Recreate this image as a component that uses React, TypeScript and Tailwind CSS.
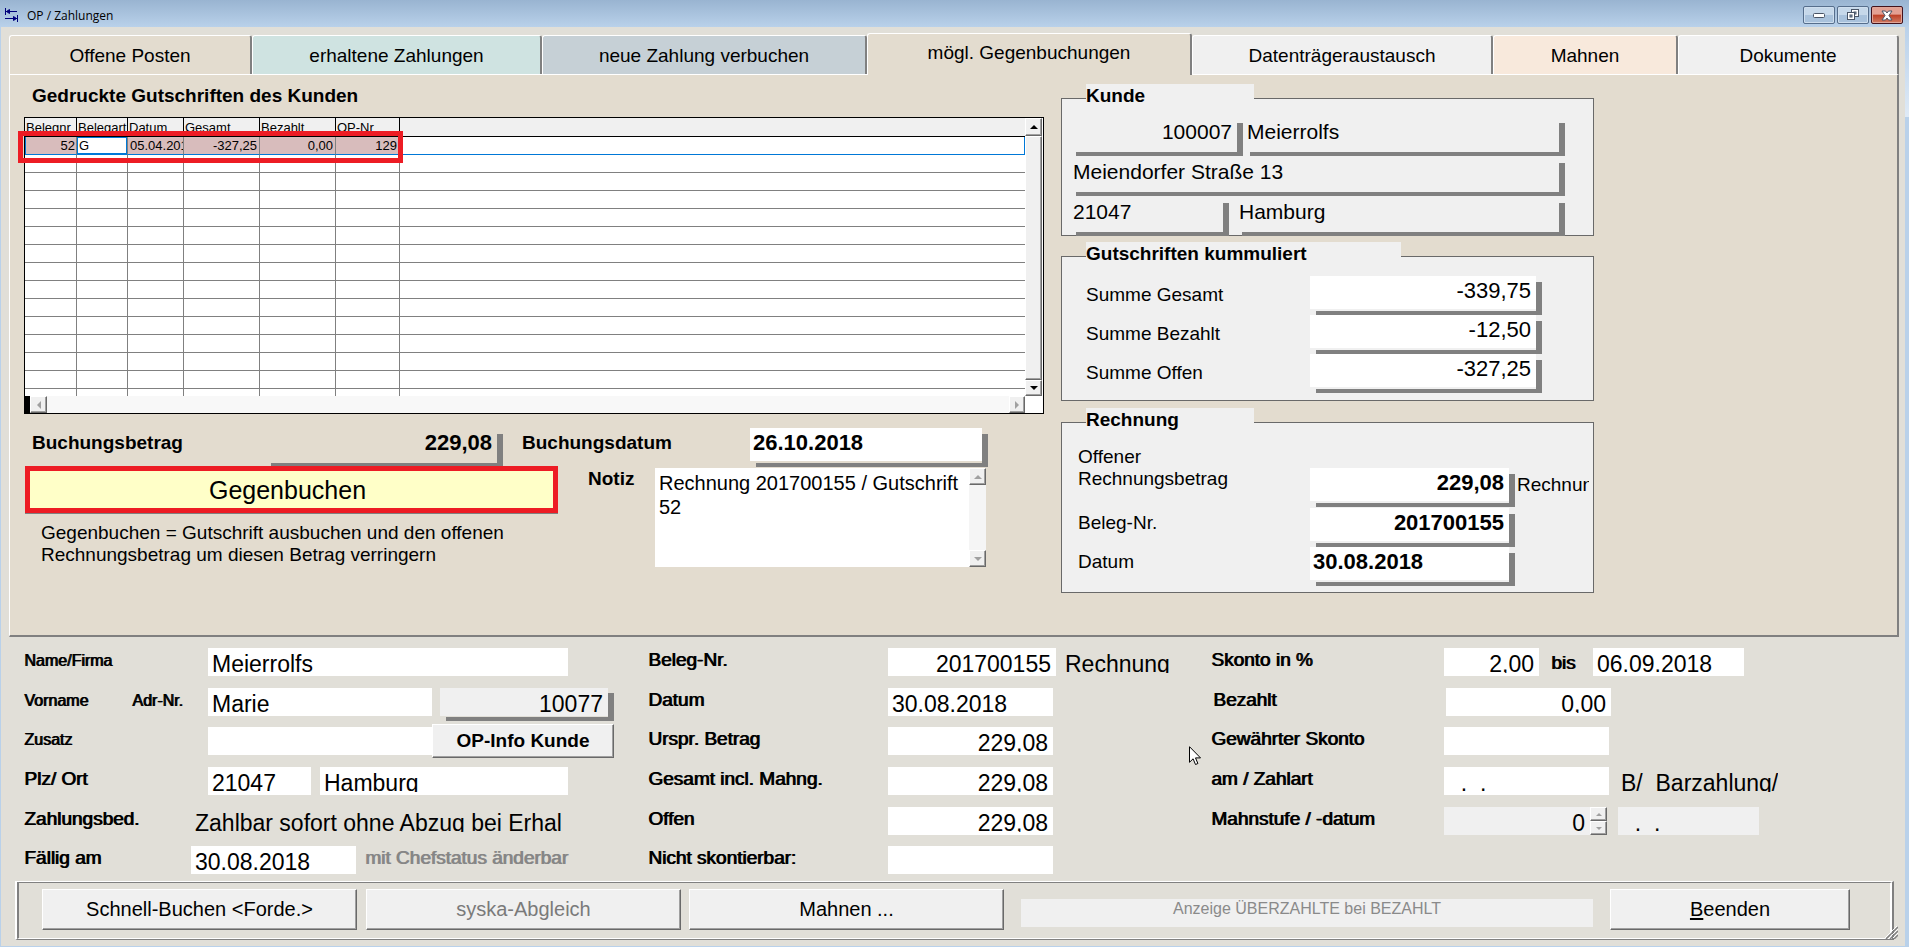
import React from "react";

const BEVEL =
  "border border-t-white border-l-white border-r-[#696969] border-b-[#696969] bg-[#f0f0f0] shadow-[inset_-1px_-1px_0_0_#a0a0a0]";

const tabs = [
  { label: "Offene Posten", cls: "flex-[240_1_0%] bg-[#e3dccf]" },
  { label: "erhaltene Zahlungen", cls: "flex-[287_1_0%] bg-[#cfe3e1]" },
  { label: "neue Zahlung verbuchen", cls: "flex-[322_1_0%] bg-[#c6d0d6]" },
  { label: "mögl. Gegenbuchungen", cls: "flex-[322_1_0%] bg-[#e3dccf]", selected: true },
  { label: "Datenträgeraustausch", cls: "flex-[298_1_0%] bg-[#f0f0f0]" },
  { label: "Mahnen", cls: "flex-[182_1_0%] bg-[#f8e9dc]" },
  { label: "Dokumente", cls: "flex-[218_1_0%] bg-[#f0f0f0]" },
];

function Arrow({ dir, className }: { dir: "up" | "down" | "left" | "right"; className: string }) {
  const points = {
    up: "0,4 8,4 4,0",
    down: "0,0 8,0 4,4",
    left: "4,0 4,8 0,4",
    right: "0,0 0,8 4,4",
  }[dir];
  const flat = dir === "up" || dir === "down";
  return (
    <svg className={className} width={flat ? 8 : 4} height={flat ? 4 : 8} viewBox={flat ? "0 0 8 4" : "0 0 4 8"} aria-hidden="true">
      <polygon points={points} fill="currentColor" />
    </svg>
  );
}

function ScrollButton({
  dir,
  className,
  label,
  small = false,
}: {
  dir: "up" | "down" | "left" | "right";
  className: string;
  label: string;
  small?: boolean;
}) {
  return (
    <button type="button" aria-label={label} className={`flex shrink-0 items-center justify-center ${BEVEL} ${className}`}>
      <Arrow dir={dir} className={small ? "h-[3px] w-[6px] shrink-0" : "shrink-0"} />
    </button>
  );
}

function ShadowField({
  id,
  label,
  value,
  className,
}: {
  id: string;
  label?: string;
  value: string;
  className: string;
}) {
  return <input id={id} aria-label={label} defaultValue={value} className={`h-[33px] pr-[5px] pb-1 pl-[3px] outline-none ${className}`} />;
}

const ON_GRAY = "shadow-[0_2px_0_0_#f0f0f0,6px_6px_0_0_#808080]";
const ON_SAND = "shadow-[0_2px_0_0_#e3dccf,6px_6px_0_0_#808080]";

function FormField({
  id,
  value = "",
  className,
  right = false,
  gray = false,
  label,
}: {
  id: string;
  value?: string;
  className: string;
  right?: boolean;
  gray?: boolean;
  label?: string;
}) {
  return (
    <div
      className={`h-7 shrink-0 overflow-hidden border-b-[3px] ${gray ? "border-[#f0f0f0] bg-[#f0f0f0]" : "border-white bg-white"} ${className}`}
    >
      <input
        id={id}
        aria-label={label}
        defaultValue={value}
        className={`block h-8 w-full bg-transparent pr-[5px] pl-1 text-[23px] outline-none ${right ? "text-right" : ""}`}
      />
    </div>
  );
}

function FormLabel({
  htmlFor,
  children,
  className,
}: {
  htmlFor?: string;
  children: React.ReactNode;
  className: string;
}) {
  return (
    <label htmlFor={htmlFor} className={`shrink-0 whitespace-nowrap [text-shadow:-1px_0_0_currentColor] ${className}`}>
      {children}
    </label>
  );
}

const LABEL = "text-[19px] leading-[23px]";
const SMALL_LABEL = "text-[16px] leading-[25px]";
const FORM_ROWS = "grid grid-rows-[40px_39px_40px_40px_39px_28px]";

const CAPTION_BUTTON =
  "flex h-[18px] w-8 items-center justify-center rounded-[2px] border border-[#566e8c] bg-linear-to-b from-[#c6d8ea] from-50% to-[#a9c2dc] to-50% shadow-[inset_0_0_0_1px_#cfdfef]";

function TitleBar() {
  return (
    <header className="flex h-[27px] items-start bg-linear-to-b from-[#99b4d1] to-[#b9d1ea] pr-[6px] pl-[5px]">
      <svg className="mt-[8px]" width="13" height="15" viewBox="0 0 13 15" aria-hidden="true" fill="#00007b" stroke="#00007b" strokeWidth="1">
        <path d="M0.500 0v7M1 3.500h11M12.500 7v7M0 10.500h12" />
        <path d="M1.500 3.500l3-2v4zM11.500 10.500l-3-2v4z" />
      </svg>
      <h1 className="ml-[9px] pt-[6px] font-['Open_Sans',sans-serif] text-[12px] leading-5">OP / Zahlungen</h1>
      <div className="mt-[6px] ml-auto flex gap-[2px]">
        <button type="button" aria-label="Minimieren" className={CAPTION_BUTTON}>
          <svg width="12" height="6" className="mt-[2px]" aria-hidden="true">
            <rect x="0.5" y="0.5" width="11" height="4" rx="1" fill="#fff" stroke="#4a5566" />
          </svg>
        </button>
        <button type="button" aria-label="Wiederherstellen" className={CAPTION_BUTTON}>
          <svg width="12" height="12" aria-hidden="true" fill="#fff" stroke="#4a5566">
            <rect x="4.5" y="0.5" width="7" height="7" />
            <rect x="7" y="3" width="2" height="2" fill="#9db6d0" />
            <rect x="0.5" y="3.5" width="7" height="7" />
            <rect x="3" y="6" width="2" height="2" fill="#9db6d0" />
          </svg>
        </button>
        <button
          type="button"
          aria-label="Schließen"
          className="flex h-[18px] w-8 items-center justify-center rounded-[2px] border border-[#43121c] bg-linear-to-b from-[#e3a093] from-45% via-[#bc3f26] via-50% to-[#d07a62] shadow-[inset_0_0_0_1px_#e0a598]"
        >
          <svg width="12" height="11" viewBox="0 0 12 11" aria-hidden="true">
            <path d="M1 1h3.500l1.500 2 1.500-2h3.500l-3 4.500 3 4.500h-3.500l-1.500-2-1.500 2h-3.500l3-4.500z" fill="#fff" stroke="#4a5566" />
          </svg>
        </button>
      </div>
    </header>
  );
}

const CELL = "h-[18px] overflow-hidden border-r border-b border-[#808080] p-0 whitespace-nowrap";
const HEAD = "h-[19px] overflow-hidden border-r border-b border-black bg-[#f0f0f0] p-0 pt-[2px] pl-px text-left font-normal whitespace-nowrap";
const MARKED = "h-[18px] overflow-hidden border-r border-b border-r-[#808080] border-b-[#0078d7] bg-[#d8bcbc] p-0 whitespace-nowrap";

function CreditTable() {
  return (
    <div className="relative mt-[10px] border border-black bg-white">
      <div className="flex h-[278px]">
        <div className="min-w-0 flex-1 overflow-hidden">
          <table className="w-full table-fixed border-separate border-spacing-0 text-[13px] leading-4">
            <colgroup>
              <col className="w-[52px]" />
              <col className="w-[51px]" />
              <col className="w-[56px]" />
              <col className="w-[76px]" />
              <col className="w-[76px]" />
              <col className="w-[64px]" />
              <col />
            </colgroup>
            <thead>
              <tr>
                <th className={HEAD}>Belegnr</th>
                <th className={HEAD}>Belegart</th>
                <th className={HEAD}>Datum</th>
                <th className={HEAD}>Gesamt</th>
                <th className={HEAD}>Bezahlt</th>
                <th className={HEAD}>OP-Nr</th>
                <th className="border-b border-black bg-[#f0f0f0] p-0" />
              </tr>
            </thead>
            <tbody>
              <tr>
                <td className={`${MARKED} border-l border-l-[#0078d7] pr-px text-right`}>52</td>
                <td className={MARKED}>
                  <input aria-label="Belegart" defaultValue="G" className="block h-[17px] w-full border border-[#0078d7] bg-white pl-px outline-none" />
                </td>
                <td className={`${MARKED} pl-[2px]`}>05.04.2018</td>
                <td className={`${MARKED} pr-[2px] text-right`}>-327,25</td>
                <td className={`${MARKED} pr-[2px] text-right`}>0,00</td>
                <td className={`${MARKED} pr-[2px] text-right`}>129</td>
                <td className="border-r border-b border-[#0078d7] p-0" />
              </tr>
              {Array.from({ length: 14 }, (_, row) => (
                <tr key={row}>
                  {Array.from({ length: 6 }, (_, col) => (
                    <td key={col} className={CELL} />
                  ))}
                  <td className="border-b border-[#808080] p-0" />
                </tr>
              ))}
            </tbody>
          </table>
        </div>
        <div className="flex w-[17px] flex-col">
          <ScrollButton dir="up" label="Nach oben" className="h-[18px]" />
          <div className={`flex-1 ${BEVEL}`} />
          <ScrollButton dir="down" label="Nach unten" className="h-4" />
        </div>
        <div className="w-px" />
      </div>
      <div className="flex h-[17px] bg-[#f8f8f8]">
        <div className="w-[5px] bg-black" />
        <ScrollButton dir="left" label="Nach links" className="w-[17px] text-[#a0a0a0]" />
        <div className="flex-1" />
        <ScrollButton dir="right" label="Nach rechts" className="w-4 text-[#a0a0a0]" />
        <div className="w-[18px] bg-white" />
      </div>
      <div className="pointer-events-none absolute top-[13px] -left-[7px] h-8 w-[385px] border-[5px] border-[#ed1c24]" />
    </div>
  );
}

function BookingArea() {
  return (
    <section className="w-[1020px] shrink-0">
      <h2 className="pt-[10px] pl-2 text-[19px] leading-[22px] font-bold">Gedruckte Gutschriften des Kunden</h2>
      <CreditTable />
      <div className="mt-[14px] flex pl-2 font-bold">
        <label htmlFor="betrag" className="w-[233px] text-[19px] leading-[30px]">
          Buchungsbetrag
        </label>
        <ShadowField id="betrag" value="229,08" className={`w-[232px] bg-[#e3dccf] text-right text-[22px] ${ON_SAND}`} />
        <label htmlFor="datum" className="ml-[25px] w-[228px] text-[19px] leading-[30px]">
          Buchungsdatum
        </label>
        <ShadowField id="datum" value="26.10.2018" className={`w-[232px] bg-white text-[22px] ${ON_SAND}`} />
      </div>
      <div className="mt-[5px] flex">
        <div className="relative ml-px w-[533px]">
          <button
            type="button"
            className="block h-[47px] w-full border-[5px] border-[#ed1c24] bg-[#ffffc8] pr-2 text-[25px] leading-9 shadow-[0_1px_0_0_#808080]"
          >
            Gegenbuchen
          </button>
          <p className="mt-[9px] pl-4 text-[19px] leading-[22px]">
            Gegenbuchen = Gutschrift ausbuchen und den offenen
            <br />
            Rechnungsbetrag um diesen Betrag verringern
          </p>
        </div>
        <label htmlFor="notiz" className="ml-[30px] w-[67px] pt-[2px] text-[19px] leading-[22px] font-bold">
          Notiz
        </label>
        <div className="mt-[2px] flex h-[99px] w-[331px] bg-white">
          <textarea
            id="notiz"
            className="min-w-0 flex-1 resize-none overflow-hidden pt-[3px] pl-1 text-[20px] leading-6 outline-none"
            defaultValue="Rechnung 201700155 / Gutschrift 52"
          />
          <div className="flex w-[17px] flex-col bg-[#f5f5f5]">
            <ScrollButton dir="up" label="Notiz nach oben" className="h-[17px] text-[#a0a0a0]" />
            <div className="flex-1" />
            <ScrollButton dir="down" label="Notiz nach unten" className="h-[17px] text-[#a0a0a0]" />
          </div>
        </div>
      </div>
    </section>
  );
}

const LEGEND = "ml-6 h-7 bg-[#f0f0f0] text-[19px] leading-[23px] font-bold";
const GROUP = "border border-[#696969] bg-[#f0f0f0]";

function SummaryArea() {
  const kunde = `bg-[#f0f0f0] text-[21px] ${ON_GRAY}`;
  const summe = `w-[226px] bg-white text-right text-[22px] ${ON_GRAY}`;
  const beleg = `w-[199px] bg-white text-[22px] font-bold ${ON_GRAY}`;
  return (
    <section className="ml-[17px] w-[533px] shrink-0 pt-[9px]">
      <fieldset className={`${GROUP} pb-[5px]`}>
        <legend className={`${LEGEND} w-[168px]`}>Kunde</legend>
        <div className="flex flex-col gap-[7px] pt-[5px] pl-2">
          <div className="flex gap-[7px]">
            <ShadowField id="kunde-nr" label="Kundennummer" value="100007" className={`w-[167px] text-right ${kunde}`} />
            <ShadowField id="kunde-name" label="Name" value="Meierrolfs" className={`w-[315px] ${kunde}`} />
          </div>
          <ShadowField id="kunde-str" label="Straße" value="Meiendorfer Straße 13" className={`w-[489px] ${kunde}`} />
          <div className="flex gap-[13px]">
            <ShadowField id="kunde-plz" label="Postleitzahl" value="21047" className={`w-[153px] ${kunde}`} />
            <ShadowField id="kunde-ort" label="Ort" value="Hamburg" className={`w-[323px] ${kunde}`} />
          </div>
        </div>
      </fieldset>

      <fieldset className={`mt-[6px] ${GROUP} pb-[13px]`}>
        <legend className={`${LEGEND} w-[315px]`}>Gutschriften kummuliert</legend>
        <div className="grid grid-cols-[224px_1fr] gap-y-[6px] pt-[6px] pl-6 text-[19px] leading-[37px]">
          <label htmlFor="s-gesamt" className="h-[33px]">Summe Gesamt</label>
          <ShadowField id="s-gesamt" value="-339,75" className={summe} />
          <label htmlFor="s-bezahlt" className="h-[33px]">Summe Bezahlt</label>
          <ShadowField id="s-bezahlt" value="-12,50" className={summe} />
          <label htmlFor="s-offen" className="h-[33px]">Summe Offen</label>
          <ShadowField id="s-offen" value="-327,25" className={summe} />
        </div>
      </fieldset>

      <fieldset className={`mt-[7px] ${GROUP} pb-3`}>
        <legend className={`${LEGEND} w-[168px]`}>Rechnung</legend>
        <div className="grid grid-cols-[232px_1fr] gap-y-[6px] pt-[10px] pl-4 text-[19px]">
          <label htmlFor="r-offen" className="leading-[22px]">
            Offener
            <br />
            Rechnungsbetrag
          </label>
          <div className="flex pt-[22px]">
            <ShadowField id="r-offen" value="229,08" className={`text-right ${beleg}`} />
            <span className="ml-2 w-[72px] overflow-hidden leading-[34px] whitespace-nowrap">Rechnung</span>
          </div>
          <label htmlFor="r-nr" className="leading-[30px]">Beleg-Nr.</label>
          <ShadowField id="r-nr" value="201700155" className={`text-right ${beleg}`} />
          <label htmlFor="r-datum" className="leading-[30px]">Datum</label>
          <ShadowField id="r-datum" value="30.08.2018" className={beleg} />
        </div>
      </fieldset>
    </section>
  );
}

function DetailForm() {
  return (
    <form className="relative flex pt-[11px] pl-6" onSubmit={(e) => e.preventDefault()}>
      <div className={`w-[589px] shrink-0 ${FORM_ROWS}`}>
        <div className="flex items-start">
          <FormLabel htmlFor="f-name" className={`w-[183px] ${SMALL_LABEL}`}>Name/Firma</FormLabel>
          <FormField id="f-name" value="Meierrolfs" className="w-[360px]" />
        </div>
        <div className="flex items-start">
          <FormLabel htmlFor="f-vorname" className={`w-[108px] ${SMALL_LABEL}`}>Vorname</FormLabel>
          <FormLabel htmlFor="f-adr" className={`w-[75px] ${SMALL_LABEL}`}>Adr-Nr.</FormLabel>
          <FormField id="f-vorname" value="Marie" className="w-[224px]" />
          <FormField
            id="f-adr"
            value="10077"
            right
            gray
            className="ml-2 w-[168px] shadow-[0_1px_0_0_#e1dfd8,6px_5px_0_0_#808080]"
          />
        </div>
        <div className="flex items-start">
          <FormLabel htmlFor="f-zusatz" className={`w-[183px] ${SMALL_LABEL}`}>Zusatz</FormLabel>
          <FormField id="f-zusatz" className="w-[224px]" />
          <button type="button" className={`-mt-[3px] h-[34px] w-[182px] text-[19px] font-bold ${BEVEL}`}>
            OP-Info Kunde
          </button>
        </div>
        <div className="flex items-start">
          <FormLabel htmlFor="f-plz" className={`w-[183px] ${LABEL}`}>Plz/ Ort</FormLabel>
          <FormField id="f-plz" value="21047" className="w-[103px]" />
          <FormField id="f-ort" label="Ort" value="Hamburg" className="ml-[9px] w-[248px]" />
        </div>
        <div className="flex items-start">
          <FormLabel className={`w-[170px] ${LABEL}`}>Zahlungsbed.</FormLabel>
          <span className="h-[25px] w-[370px] overflow-hidden text-[23px] leading-8 whitespace-nowrap">
            Zahlbar sofort ohne Abzug bei Erhal
          </span>
        </div>
        <div className="flex items-start">
          <FormLabel htmlFor="f-faellig" className={`w-[166px] ${LABEL}`}>Fällig am</FormLabel>
          <FormField id="f-faellig" value="30.08.2018" className="w-[165px]" />
          <span className="ml-[10px] text-[19px] leading-[23px] text-[#868686] [text-shadow:-1px_0_0_currentColor]">
            mit Chefstatus änderbar
          </span>
        </div>
      </div>

      <div className={`ml-[35px] w-[530px] shrink-0 ${FORM_ROWS}`}>
        <div className="flex items-start">
          <FormLabel htmlFor="f-beleg" className={`w-[239px] ${LABEL}`}>Beleg-Nr.</FormLabel>
          <FormField id="f-beleg" value="201700155" right className="w-[168px]" />
          <span className="ml-[9px] h-[25px] overflow-hidden text-[23px] leading-8">Rechnung</span>
        </div>
        <div className="flex items-start">
          <FormLabel htmlFor="f-datum" className={`w-[239px] ${LABEL}`}>Datum</FormLabel>
          <FormField id="f-datum" value="30.08.2018" className="w-[165px]" />
        </div>
        <div className="flex items-start">
          <FormLabel htmlFor="f-urspr" className={`w-[239px] ${LABEL}`}>Urspr. Betrag</FormLabel>
          <FormField id="f-urspr" value="229,08" right className="w-[165px]" />
        </div>
        <div className="flex items-start">
          <FormLabel htmlFor="f-gesamt" className={`w-[239px] ${LABEL}`}>Gesamt incl. Mahng.</FormLabel>
          <FormField id="f-gesamt" value="229,08" right className="w-[165px]" />
        </div>
        <div className="flex items-start">
          <FormLabel htmlFor="f-offen" className={`w-[239px] ${LABEL}`}>Offen</FormLabel>
          <FormField id="f-offen" value="229,08" right className="w-[165px]" />
        </div>
        <div className="flex items-start">
          <FormLabel htmlFor="f-nicht" className={`w-[239px] ${LABEL}`}>Nicht skontierbar:</FormLabel>
          <FormField id="f-nicht" right className="w-[165px]" />
        </div>
      </div>

      <div className={`ml-[33px] ${FORM_ROWS}`}>
        <div className="flex items-start">
          <FormLabel htmlFor="f-skonto" className={`w-[232px] ${LABEL}`}>Skonto in %</FormLabel>
          <FormField id="f-skonto" value="2,00" right className="w-[95px]" />
          <FormLabel htmlFor="f-bis" className="ml-[13px] w-[41px] text-[19px] leading-[30px]">bis</FormLabel>
          <FormField id="f-bis" value="06.09.2018" className="w-[151px]" />
        </div>
        <div className="flex items-start pl-[2px]">
          <FormLabel htmlFor="f-bezahlt" className={`w-[232px] ${LABEL}`}>Bezahlt</FormLabel>
          <FormField id="f-bezahlt" value="0,00" right className="w-[165px]" />
        </div>
        <div className="flex items-start">
          <FormLabel htmlFor="f-gewaehrt" className={`w-[232px] ${LABEL}`}>Gewährter Skonto</FormLabel>
          <FormField id="f-gewaehrt" right className="w-[165px]" />
        </div>
        <div className="flex items-start">
          <FormLabel htmlFor="f-am" className={`w-[232px] ${LABEL}`}>am / Zahlart</FormLabel>
          <FormField id="f-am" value="  .  ." className="w-[165px]" />
          <span className="ml-3 h-[25px] overflow-hidden text-[23px] leading-8 whitespace-pre">{"B/  Barzahlung/"}</span>
        </div>
        <div className="flex items-start">
          <FormLabel htmlFor="f-stufe" className={`w-[232px] ${LABEL}`}>Mahnstufe / -datum</FormLabel>
          <FormField id="f-stufe" value="0" right gray className="w-[146px]" />
          <div className="flex w-[17px] flex-col text-[#a0a0a0]">
            <ScrollButton small dir="up" label="Mahnstufe erhöhen" className="h-[14px]" />
            <ScrollButton small dir="down" label="Mahnstufe verringern" className="h-[14px]" />
          </div>
          <FormField id="f-mahndatum" label="Mahndatum" value="  .  ." gray className="ml-[11px] w-[141px]" />
        </div>
      </div>

      <svg className="pointer-events-none absolute top-[109px] left-[1188px]" width="13" height="20" viewBox="0 0 13 20" aria-hidden="true">
        <path d="M0.5 0.700v15.600l3.600-3.500 2.400 5.700 2.400-1-2.400-5.600h5z" fill="#fff" stroke="#000" strokeWidth="1" />
      </svg>
    </form>
  );
}

function Footer() {
  const button = `h-[41px] shrink-0 pb-[2px] text-[20px] ${BEVEL}`;
  return (
    <footer className="relative mt-[7px] mr-[11px] mb-[6px] ml-[14px] border-x-2 border-y border-t-white border-r-[#808080] border-b-[#808080] border-l-white">
      <div className="border-x-2 border-y border-t-[#808080] border-r-white border-b-white border-l-[#808080]">
        <div className="flex pt-[6px] pr-[40px] pb-2 pl-[23px]">
          <button type="button" className={`w-[315px] ${button}`}>Schnell-Buchen &lt;Forde.&gt;</button>
          <button type="button" disabled className={`ml-[9px] w-[315px] text-[#7a7a7a] ${button}`}>syska-Abgleich</button>
          <button type="button" className={`ml-2 w-[315px] ${button}`}>Mahnen ...</button>
          <div className="mx-[17px] mt-[10px] h-7 flex-1 bg-[#f0f0f0] text-center text-[16px] leading-[19px] text-[#8a8a8a]">
            Anzeige ÜBERZAHLTE bei BEZAHLT
          </div>
          <button type="button" className={`w-[240px] ${button}`}>
            <span className="underline underline-offset-2">B</span>eenden
          </button>
        </div>
      </div>
      <svg className="absolute -right-[6px] bottom-0 text-[#808080]" width="13" height="13" aria-hidden="true" stroke="currentColor">
        <path d="M1 13 13 1M5 13 13 5M9 13 13 9" strokeWidth="1.500" />
        <path d="M0 12 12 0M4 12 13 3M8 12 13 7" stroke="#fff" strokeWidth="1" />
      </svg>
    </footer>
  );
}

export default function App() {
  return (
    <div className="flex min-h-screen flex-col font-['Liberation_Sans',Arial,sans-serif] text-black">
      <TitleBar />
      <div className="flex flex-1 border-b border-l border-[#b9d1ea] bg-[#e1dfd8]">
        <main className="flex min-w-0 flex-1 flex-col">
          <div className="pt-[6px] pr-[6px] pl-2">
            <div role="tablist" className="flex items-end">
              {tabs.map((tab) => (
                <button
                  key={tab.label}
                  type="button"
                  role="tab"
                  aria-selected={!!tab.selected}
                  className={`rounded-t-[3px] border-t border-r-2 border-l border-t-white border-r-[#808080] border-l-white text-[19px] whitespace-nowrap ${tab.cls} ${
                    tab.selected ? "relative -mb-px h-[42px] pb-[2px]" : "h-[39px] pt-[2px]"
                  }`}
                >
                  {tab.label}
                </button>
              ))}
            </div>
            <div className="flex min-h-[563px] border-t border-r-2 border-b-2 border-l border-t-white border-r-[#808080] border-b-[#808080] border-l-white bg-[#e3dccf] pl-[14px]">
              <BookingArea />
              <SummaryArea />
            </div>
          </div>
          <DetailForm />
          <Footer />
        </main>
        <div className="w-1 bg-[#b9d1ea]">
          <div className="h-[90px] bg-linear-to-b from-[#b9d1ea] to-[#dfeaf6]" />
        </div>
      </div>
    </div>
  );
}
